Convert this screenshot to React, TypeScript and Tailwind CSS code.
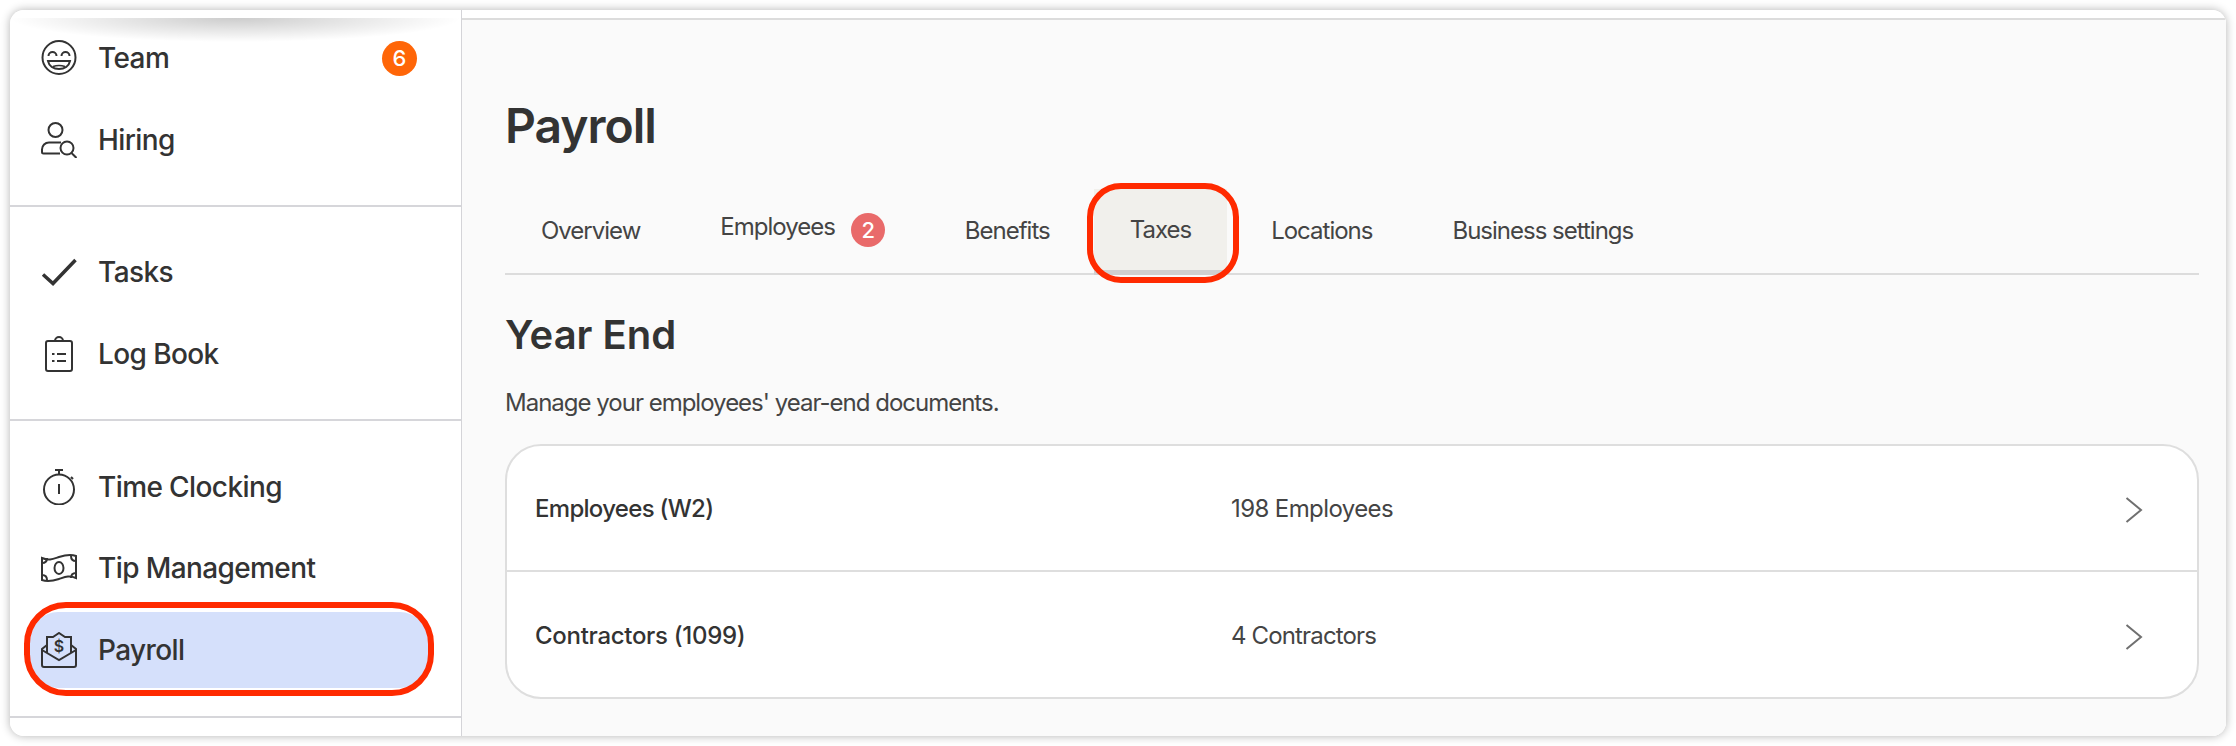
import type { ReactNode } from "react";

const icon = "fill-none stroke-[#333] stroke-2";

function SmileIcon() {
  return (
    <svg viewBox="0 0 36 36" className={`h-9 w-9 ${icon}`}>
      <circle cx="18" cy="17.500" r="16.500" />
      <path d="M7.500 16a4 4 0 0 1 8 0M20.500 16a4 4 0 0 1 8 0" />
      <path d="M7 21h22c-1 5-5.500 8-11 8S8 26 7 21z" />
      <path d="M12 26.500c3.500-1.200 8.500-1.200 12 0" className="stroke-[1.5]" />
    </svg>
  );
}

function HiringIcon() {
  return (
    <svg viewBox="0 0 36 36" className={`h-9 w-9 ${icon}`}>
      <circle cx="14.500" cy="8" r="7" />
      <path d="M20 20.500H8a7 7 0 0 0-7 7v2.500a1.500 1.500 0 0 0 1.500 1.500H19" />
      <circle cx="26" cy="26" r="6.500" />
      <path d="M30.500 31l5 5" />
    </svg>
  );
}

function CheckIcon() {
  return (
    <svg viewBox="0 0 36 28" className="h-7 w-9 fill-none stroke-[#333] stroke-[3.5]">
      <path d="M2 16.500L12 25.500 34.500 2" />
    </svg>
  );
}

function LogBookIcon() {
  return (
    <svg viewBox="0 0 36 36" className={`h-9 w-9 ${icon}`}>
      <rect x="5" y="5" width="26" height="30" rx="2" />
      <path d="M14 5a4 4 0 0 1 8 0" />
      <path d="M16 18h9M16 25h9" />
      <path d="M11 18h2.500M11 25h2.500" />
    </svg>
  );
}

function TimeIcon() {
  return (
    <svg viewBox="0 0 36 36" className={`h-9 w-9 ${icon}`}>
      <circle cx="18" cy="20.500" r="15" />
      <path d="M18 5V1M14 1h8M30 8l2 2M18 15v10" />
    </svg>
  );
}

function TipIcon() {
  return (
    <svg viewBox="0 0 36 30" className={`h-[30px] w-9 ${icon}`}>
      <path d="M1 5c7 3 11 1 17-1s12-3 17-1v22c-7-3-11-1-17 1S6 29 1 27z" />
      <ellipse cx="18" cy="15" rx="4.500" ry="6" />
      <path d="M1 10c3 0 5-2 5-5M35 8c-3 0-5-2-5-5M1 22c3 0 5 2 5 5M35 20c-3 0-5 2-5 5" />
    </svg>
  );
}

function PayrollIcon() {
  return (
    <svg viewBox="0 0 36 36" className={`h-9 w-9 ${icon}`}>
      <path d="M6 13L1 17v16a2 2 0 0 0 2 2h30a2 2 0 0 0 2-2V17l-5-4" />
      <path d="M1 18l17 10 17-10" />
      <path d="M6 21V5h6l6-4 6 4h6v16" />
      <text x="18" y="20" textAnchor="middle" className="fill-[#333] stroke-0 text-[16px] font-semibold [font-family:Inter,sans-serif]">$</text>
    </svg>
  );
}

function Chevron() {
  return (
    <svg viewBox="0 0 18 26" className="mt-[2px] h-[26px] w-[18px] fill-none stroke-[#707070] stroke-2">
      <path d="M1.500 1L16 13 1.500 25" />
    </svg>
  );
}

function NavItem({ icon, label, badge, active }: { icon: ReactNode; label: string; badge?: string; active?: boolean }) {
  return (
    <div className={`relative flex h-[76px] items-center rounded-[28px] px-[11px] ${active ? "bg-[#d5e0fb]" : ""}`}>
      <span className="flex w-9 shrink-0 justify-center">{icon}</span>
      <span className="ml-[21px] flex-1 text-[28px] font-medium tracking-[-0.6px] text-[#333]">{label}</span>
      {badge && (
        <span className="flex h-[35px] w-[35px] items-center justify-center rounded-full bg-[#ff6608] text-[22px] font-medium text-white">
          {badge}
        </span>
      )}
      {active && <span className="absolute -bottom-2 -left-[6px] -right-[6px] -top-[10px] rounded-[42px] border-[6px] border-[#ff2a00]" />}
    </div>
  );
}

const tabs = ["Overview", "Employees", "Benefits", "Taxes", "Locations", "Business settings"];

const rows = [
  { name: "Employees (W2)", count: "198 Employees", nameClass: "tracking-[-0.7px]", countClass: "tracking-[-0.6px]" },
  { name: "Contractors (1099)", count: "4 Contractors", nameClass: "tracking-[-0.3px]", countClass: "tracking-[-0.85px]" },
];

export default function App() {
  return (
    <div className="h-[746px] w-[2236px] bg-white p-[10px] [font-family:Inter,sans-serif]">
      <div className="flex h-[726px] overflow-hidden rounded-[14px] bg-white shadow-[0_0_10px_rgba(0,0,0,0.3)]">
        {/* Sidebar */}
        <aside className="relative w-[452px] shrink-0 border-r border-[#d4d4d8] bg-white pt-2">
          <div className="pointer-events-none absolute left-0 right-0 top-2 h-6 bg-[radial-gradient(ellipse_50%_100%_at_50%_0%,rgba(0,0,0,0.2),transparent)]" />
          <div className="border-b-2 border-[#d6d6da] pb-[27px] pl-5 pr-[33px] pt-[2px]">
            <NavItem icon={<SmileIcon />} label="Team" badge="6" />
            <div className="mt-[6px]">
              <NavItem icon={<HiringIcon />} label="Hiring" />
            </div>
          </div>
          <div className="border-b-2 border-[#d6d6da] pb-[27px] pl-5 pr-[33px] pt-[27px]">
            <NavItem icon={<CheckIcon />} label="Tasks" />
            <div className="mt-[6px]">
              <NavItem icon={<LogBookIcon />} label="Log Book" />
            </div>
          </div>
          <div className="border-b-2 border-[#d6d6da] pb-[28px] pl-5 pr-[33px] pt-[28px]">
            <NavItem icon={<TimeIcon />} label="Time Clocking" />
            <div className="mt-[5px]">
              <NavItem icon={<TipIcon />} label="Tip Management" />
            </div>
            <div className="mt-[6px]">
              <NavItem icon={<PayrollIcon />} label="Payroll" active />
            </div>
          </div>
        </aside>

        {/* Main */}
        <main className="flex-1 bg-white pt-2">
          <div className="h-full border-t-2 border-[#dcdcdc] bg-[#fafafa] pl-[43px] pr-[27px] pt-[78px]">
            <h1 className="text-[48px] font-semibold leading-[56px] tracking-[-1px] text-[#333]">Payroll</h1>
            <nav className="mt-[35px] flex h-[86px] gap-2 border-b-2 border-[#dcdcdc]">
              {tabs.map((tab) => (
                <div
                  key={tab}
                  className={`relative flex items-center gap-4 px-9 text-[24px] tracking-[-1px] text-[#444] ${
                    tab === "Taxes" ? "-mb-[2px] border-b-[5px] border-[#d0d0d0] bg-[#f1f0ec]" : ""
                  }`}
                >
                  <span className={tab === "Employees" ? "-mt-2" : ""}>{tab}</span>
                  {tab === "Employees" && (
                    <span className="-mt-[2px] flex h-[34px] w-[34px] items-center justify-center rounded-full bg-[#e96a6a] text-[22px] font-medium text-white">
                      2
                    </span>
                  )}
                  {tab === "Taxes" && <span className="absolute -bottom-[13px] -left-[7px] -right-[12px] -top-[6px] rounded-[34px] border-[6px] border-[#ff2a00]" />}
                </div>
              ))}
            </nav>
            <h2 className="mt-[36px] text-[40px] font-semibold leading-[48px] text-[#333]">Year End</h2>
            <p className="mt-[28px] text-[24px] leading-[32px] tracking-[-1px] text-[#444]">Manage your employees' year-end documents.</p>
            <div className="mt-[25px] overflow-hidden rounded-[36px] border-2 border-[#dedede] bg-white">
              {rows.map((row, i) => (
                <div key={row.name} className={`flex items-center pl-[28px] pr-[54px] pt-[2px] ${i === 0 ? "h-[126px] border-b-2 border-[#dedede]" : "h-[125px]"}`}>
                  <span className={`w-[696px] text-[24px] font-medium text-[#333] ${row.nameClass}`}>{row.name}</span>
                  <span className={`flex-1 text-[24px] text-[#444] ${row.countClass}`}>{row.count}</span>
                  <Chevron />
                </div>
              ))}
            </div>
          </div>
        </main>
      </div>
    </div>
  );
}
